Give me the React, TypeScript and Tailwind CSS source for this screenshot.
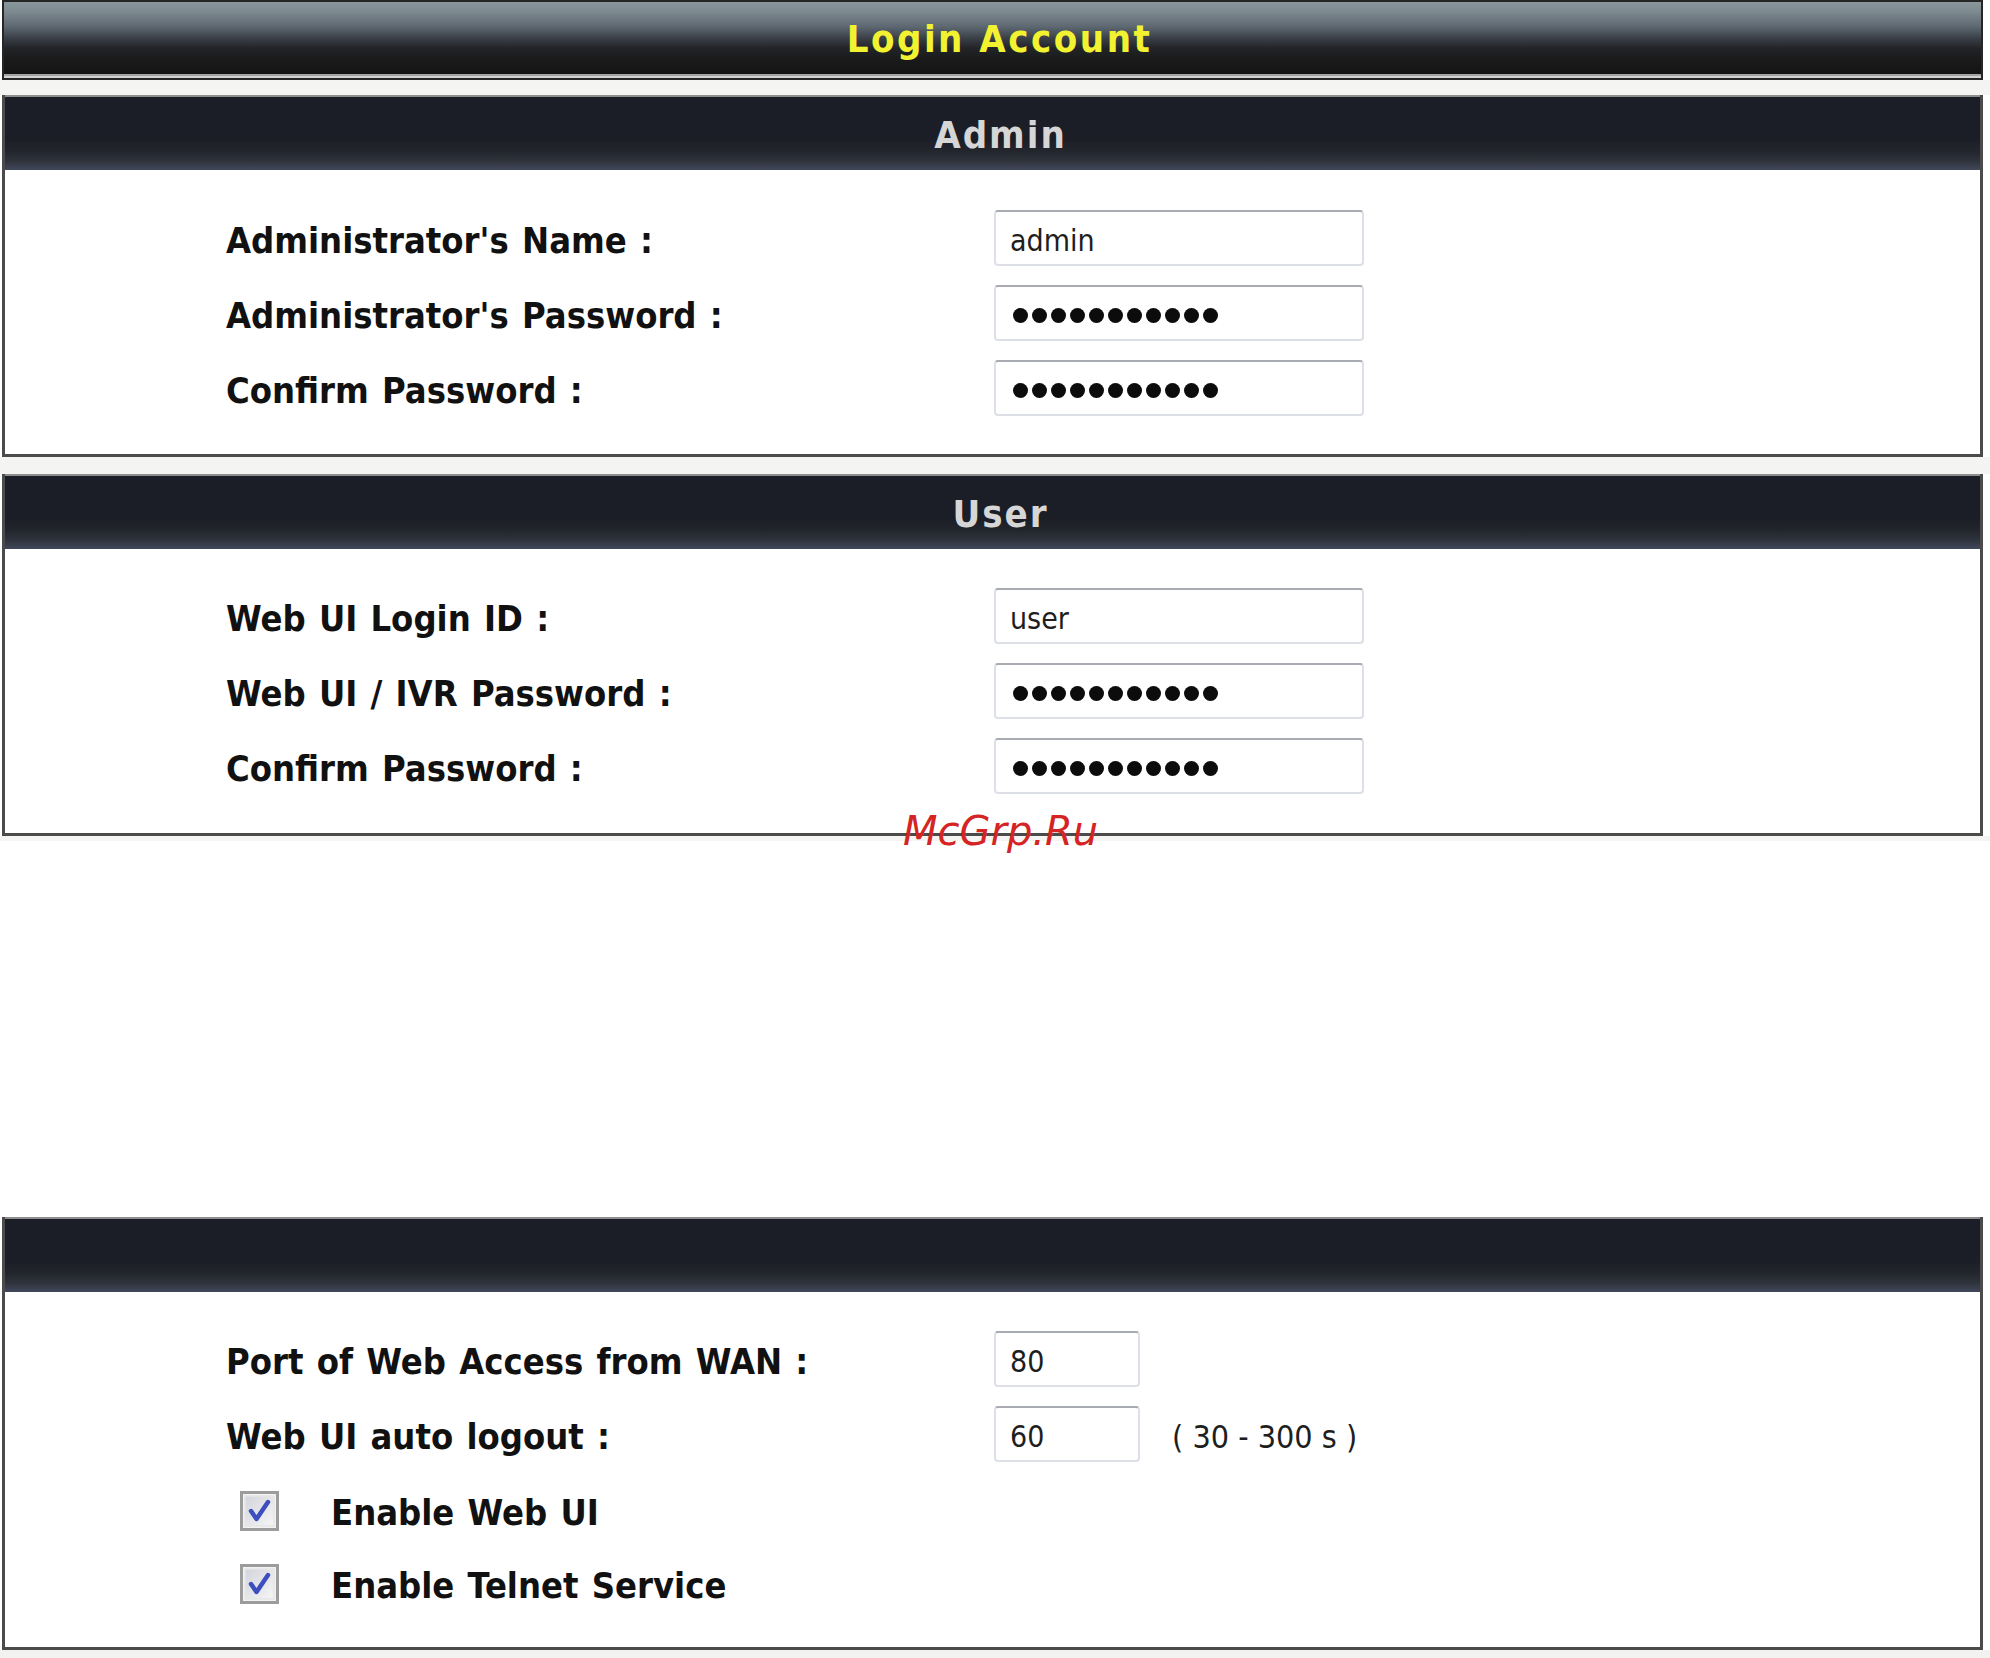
import React from "react";

const labelFont = { fontFamily: '"DejaVu Sans Condensed", "DejaVu Sans", Tahoma, sans-serif' };

function SectionHeader({ title }: { title?: string }) {
  return (
    <div className="h-[75px] flex items-center justify-center border-t-2 border-[#8d8d8d] bg-[linear-gradient(180deg,#1b1e26_0%,#1b1e26_58%,#23262d_75%,#2f333d_88%,#41485b_100%)]">
      {title && (
        <span className="text-[38px] font-bold tracking-[2px] text-[#d6d6d6] mt-[4px] pl-[16px]">{title}</span>
      )}
    </div>
  );
}

function TextBox({ value, width = "w-[370px]" }: { value: string; width?: string }) {
  return (
    <input
      readOnly
      defaultValue={value}
      className={`${width} h-[56px] rounded-[4px] border-2 border-[#dde0e6] border-t-[#a9abb2] bg-white pl-[14px] pt-[5px] text-[30px] text-[#1e1e1e] outline-none`}
    />
  );
}

function PasswordBox() {
  return (
    <div className="w-[370px] h-[56px] rounded-[4px] border-2 border-[#dde0e6] border-t-[#a9abb2] bg-white pl-[17px] pt-[5px] flex items-center gap-[4px]">
      {Array.from({ length: 11 }).map((_, i) => (
        <span key={i} className="w-[15px] h-[15px] rounded-full bg-[#0c0c0c]" />
      ))}
    </div>
  );
}

function Row({ label, children }: { label: string; children: React.ReactNode }) {
  return (
    <div className="flex items-center h-[56px]">
      <div className="w-[768px] text-[36px] font-bold text-[#111] [word-spacing:2px] mt-[5px]">{label}</div>
      {children}
    </div>
  );
}

function CheckBox() {
  return (
    <svg width="39" height="40" viewBox="0 0 39 40">
      <defs>
        <linearGradient id="cbfill" x1="0" y1="0" x2="1" y2="1">
          <stop offset="0" stopColor="#d3d4dc" />
          <stop offset="1" stopColor="#f6f6f6" />
        </linearGradient>
      </defs>
      <rect x="1.5" y="1.5" width="36" height="37" fill="#f2f2f2" stroke="#9c9c9c" strokeWidth="3" />
      <rect x="5" y="5" width="29" height="30" fill="url(#cbfill)" stroke="#e6e6e6" strokeWidth="1.5" />
      <path d="M11 20 L16.5 28 L28 11" fill="none" stroke="#3d4fbf" strokeWidth="4.5" strokeLinejoin="round" strokeLinecap="round" />
    </svg>
  );
}

function CheckRow({ label }: { label: string }) {
  return (
    <div className="flex items-center h-[40px] pl-[14px]">
      <CheckBox />
      <span className="ml-[52px] text-[36px] font-bold text-[#111] [word-spacing:2px] mt-[4px]">{label}</span>
    </div>
  );
}

export default function App() {
  return (
    <div className="relative w-[1990px] h-[1658px] bg-white overflow-hidden" style={labelFont}>
      <div className="pl-[2px] pr-[7px]">
        {/* title bar */}
        <div className="h-[80px] flex flex-col border-2 border-[#262626]">
          <div className="flex-1 flex items-center justify-center bg-[linear-gradient(180deg,#8a979b_0%,#7c898e_14%,#5e6872_34%,#3b4048_50%,#222428_64%,#1a1a1a_80%,#141414_100%)]">
            <span className="text-[38px] font-bold tracking-[2.5px] text-[#f2f231] mt-[2px] pl-[14px]">Login Account</span>
          </div>
          <div className="h-[2px] bg-[#a4a4a4]" />
          <div className="h-[2px] bg-[#d2d2d2]" />
        </div>
      </div>

      <div className="h-[15px] bg-[#f4f4f2]" />

      <div className="pl-[2px] pr-[7px]">
        <div className="border-x-[3px] border-b-[3px] border-[#4b4b4b]">
          <SectionHeader title="Admin" />
          <div className="bg-white pl-[221px] pt-[40px] pb-[38px] flex flex-col gap-[19px]">
            <Row label="Administrator's Name :">
              <TextBox value="admin" />
            </Row>
            <Row label="Administrator's Password :">
              <PasswordBox />
            </Row>
            <Row label="Confirm Password :">
              <PasswordBox />
            </Row>
          </div>
        </div>
      </div>

      <div className="h-[17px] bg-[#f4f4f2]" />

      <div className="pl-[2px] pr-[7px]">
        <div className="border-x-[3px] border-b-[3px] border-[#4b4b4b]">
          <SectionHeader title="User" />
          <div className="bg-white pl-[221px] pt-[39px] pb-[39px] flex flex-col gap-[19px]">
            <Row label="Web UI Login ID :">
              <TextBox value="user" />
            </Row>
            <Row label="Web UI / IVR Password :">
              <PasswordBox />
            </Row>
            <Row label="Confirm Password :">
              <PasswordBox />
            </Row>
          </div>
        </div>
      </div>

      <div className="h-[5px] bg-[#f4f4f2]" />
      <div className="h-[376px] bg-white" />

      <div className="pl-[2px] pr-[7px]">
        <div className="border-x-[3px] border-b-[3px] border-[#4b4b4b]">
          <SectionHeader />
          <div className="bg-white pl-[221px] pt-[39px] pb-[43px] flex flex-col">
            <Row label="Port of Web Access from WAN :">
              <TextBox value="80" width="w-[146px]" />
            </Row>
            <div className="mt-[19px]">
              <Row label="Web UI auto logout :">
                <TextBox value="60" width="w-[146px]" />
                <span className="ml-[32px] mt-[5px] text-[32px] text-[#1e1e1e]">( 30 - 300 s )</span>
              </Row>
            </div>
            <div className="mt-[29px] flex flex-col gap-[33px]">
              <CheckRow label="Enable Web UI" />
              <CheckRow label="Enable Telnet Service" />
            </div>
          </div>
        </div>
      </div>

      <div className="h-[10px] bg-[#f2f2f0]" />

      <span
        className="absolute left-[903px] top-[811px] text-[40px] italic leading-none text-[#d42424]"
        style={{ fontFamily: '"DejaVu Sans", sans-serif' }}
      >
        McGrp.Ru
      </span>
    </div>
  );
}
